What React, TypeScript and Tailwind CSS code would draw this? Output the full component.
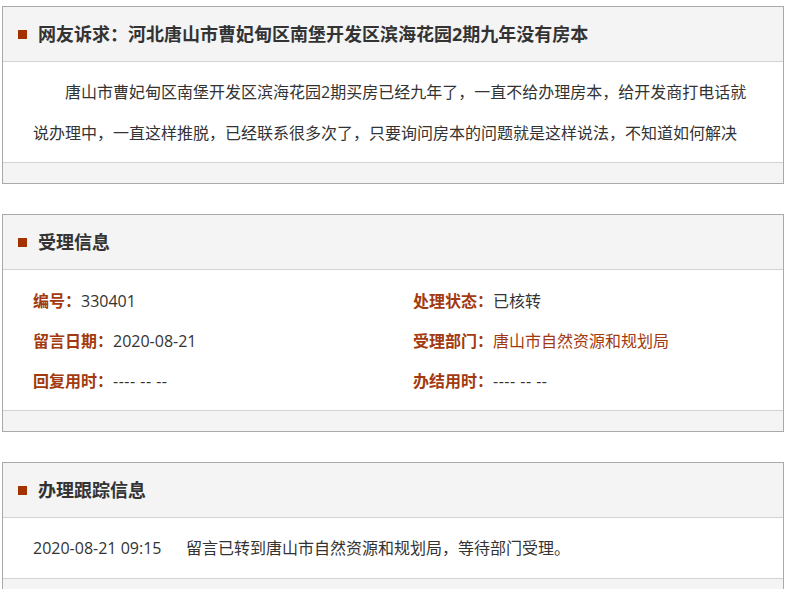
import React from "react";

const font = { fontFamily: '"Open Sans", "Noto Sans CJK SC", sans-serif' };

function Header({ title }: { title: string }) {
  return (
    <div className="h-[55px] bg-[#f4f4f4] border-b border-[#d3d3d3] flex items-center pl-[15px]">
      <span className="w-[9px] h-[9px] bg-[#a33200] mr-[11px] shrink-0" />
      <span className="text-[18px] font-bold text-[#333333]">{title}</span>
    </div>
  );
}

function Footer() {
  return <div className="h-[21px] bg-[#f4f4f4] border-t border-[#d3d3d3]" />;
}

export default function App() {
  const dash = <span className="tracking-[0.5px]">---- -- --</span>;
  const rows: [string, React.ReactNode, string, React.ReactNode][] = [
    ["编号：", "330401", "处理状态：", "已核转"],
    ["留言日期：", "2020-08-21", "受理部门：", <span className="text-[#a33a0f]">唐山市自然资源和规划局</span>],
    ["回复用时：", dash, "办结用时：", dash],
  ];
  return (
    <div className="bg-white min-h-[589px] pt-[6px]" style={font}>
      <div className="w-[782px] ml-[2px] border border-[#a9a9a9]">
        <Header title="网友诉求：河北唐山市曹妃甸区南堡开发区滨海花园2期九年没有房本" />
        <div className="pl-[30px] pr-[30px] pt-[10px] pb-[8px] text-[16px] leading-[41px] text-[#333333] indent-[32px]">
          唐山市曹妃甸区南堡开发区滨海花园2期买房已经九年了，一直不给办理房本，给开发商打电话就说办理中，一直这样推脱，已经联系很多次了，只要询问房本的问题就是这样说法，不知道如何解决
        </div>
        <Footer />
      </div>

      <div className="w-[782px] ml-[2px] mt-[30px] border border-[#a9a9a9]">
        <Header title="受理信息" />
        <div className="py-[10px] text-[16px] text-[#333333]">
          {rows.map((r, i) => (
            <div key={i} className="flex h-[40px] items-center pt-[2px]">
              <div className="w-[410px] pl-[30px]">
                <span className="font-bold text-[#a33a0f]">{r[0]}</span>
                <span>{r[1]}</span>
              </div>
              <div>
                <span className="font-bold text-[#a33a0f]">{r[2]}</span>
                <span>{r[3]}</span>
              </div>
            </div>
          ))}
        </div>
        <Footer />
      </div>

      <div className="w-[782px] ml-[2px] mt-[30px] border border-[#a9a9a9]">
        <Header title="办理跟踪信息" />
        <div className="py-[10px] pl-[30px] text-[16px] leading-[40px] text-[#333333]">
          <span className="inline-block w-[153px]">2020-08-21 09:15</span>
          <span>留言已转到唐山市自然资源和规划局，等待部门受理。</span>
        </div>
        <Footer />
      </div>
    </div>
  );
}
